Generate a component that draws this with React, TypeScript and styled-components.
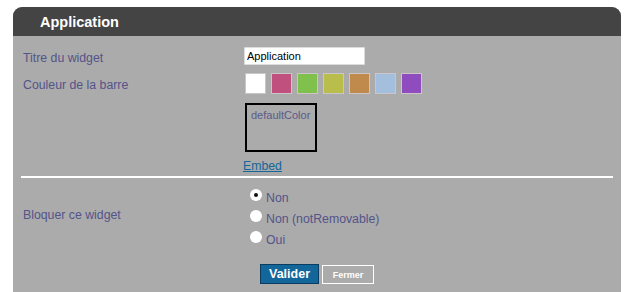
import React, { useState } from "react"
import styled, { createGlobalStyle } from "styled-components"

const GlobalStyle = createGlobalStyle`
  html, body {
    margin: 0;
    padding: 0;
    background: #ffffff;
    font-family: "Liberation Sans", Arial, sans-serif;
  }
`

const COLORS = ["#ffffff", "#c0507e", "#80c04c", "#b8bd4c", "#c08a4c", "#a4bfdd", "#8e4cbf"]

const Panel = styled.div`
  margin: 7px 0 0 13px;
  width: 608px;
  height: 285px;
  background: #ababab;
  border-radius: 9px 9px 0 0;
  overflow: hidden;
`

const Header = styled.div`
  height: 29px;
  background: #444444;
  color: #ffffff;
  font-weight: bold;
  font-size: 14.5px;
  display: flex;
  align-items: center;
  padding-left: 27px;
  padding-top: 1px;
  box-sizing: border-box;
`

const Body = styled.div`
  padding: 11px 8px 0 8px;
`

const Row = styled.div<{ $center?: boolean }>`
  display: grid;
  grid-template-columns: 221px 1fr;
  align-items: ${p => (p.$center ? "center" : "start")};
  padding-left: 2px;
`

const Label = styled.div<{ $top?: number }>`
  color: #54548a;
  font-size: 12.3px;
  padding-top: ${p => p.$top ?? 0}px;
`

const TextInput = styled.input`
  width: 121px;
  height: 18px;
  box-sizing: border-box;
  border: 1px solid #dddddd;
  background: #ffffff;
  font-family: "Liberation Sans", Arial, sans-serif;
  font-size: 11px;
  color: #000000;
  padding: 0 2px;
  border-radius: 1px;
  outline: none;
`

const Swatches = styled.div`
  display: flex;
  gap: 5px;
  margin: 8px 0 0 1px;
`

const Swatch = styled.div<{ $color: string }>`
  width: 21px;
  height: 21px;
  box-sizing: border-box;
  background: ${p => p.$color};
  border: 1px solid #cbc4c8;
`

const Preview = styled.div`
  margin: 9px 0 0 1px;
  width: 72px;
  height: 49px;
  box-sizing: border-box;
  border: 2px solid #000000;
  padding: 4px 4px;
  font-size: 11px;
  color: #5a5a8a;
`

const EmbedLink = styled.a`
  display: inline-block;
  margin: 7px 0 0 -1px;
  font-size: 12.3px;
  color: #13679a;
  text-decoration: underline;
`

const Separator = styled.div`
  height: 2px;
  background: #ffffff;
  margin: 2px 0 0 0;
`

const RadioList = styled.div`
  display: flex;
  flex-direction: column;
  gap: 4px;
  padding: 11px 0 0 6px;
`

const RadioRow = styled.label`
  display: flex;
  align-items: center;
  gap: 4px;
  font-size: 12.3px;
  color: #54548a;
  height: 17px;
`

const RadioDot = styled.span<{ $checked: boolean }>`
  width: 12px;
  height: 12px;
  border-radius: 50%;
  background: #ffffff;
  display: flex;
  align-items: center;
  justify-content: center;
  margin-top: -5px;
  &::after {
    content: "";
    width: 4px;
    height: 4px;
    border-radius: 50%;
    background: ${p => (p.$checked ? "#111111" : "transparent")};
  }
`

const Buttons = styled.div`
  display: flex;
  gap: 3px;
  padding: 16px 0 0 239px;
  align-items: center;
`

const PrimaryButton = styled.button`
  width: 59px;
  height: 20px;
  background: #12669a;
  border: 1px solid #0b3d60;
  color: #ffffff;
  font-family: "Liberation Sans", Arial, sans-serif;
  font-weight: bold;
  font-size: 12.5px;
  padding: 0;
`

const GhostButton = styled.button`
  width: 52px;
  height: 19px;
  margin-top: 1px;
  background: transparent;
  border: 1px solid #ffffff;
  color: #ffffff;
  font-family: "Liberation Sans", Arial, sans-serif;
  font-weight: bold;
  font-size: 9px;
  padding: 0;
`

const OPTIONS = ["Non", "Non (notRemovable)", "Oui"]

export default function App() {
  const [choice, setChoice] = useState(0)

  return (
    <>
      <GlobalStyle />
      <Panel>
        <Header>Application</Header>
        <Body>
          <Row $center>
            <Label $top={3}>Titre du widget</Label>
            <TextInput defaultValue="Application" />
          </Row>
          <Row>
            <Label $top={13}>Couleur de la barre</Label>
            <div>
              <Swatches>
                {COLORS.map(c => (
                  <Swatch key={c} $color={c} />
                ))}
              </Swatches>
              <Preview>defaultColor</Preview>
              <EmbedLink href="#">Embed</EmbedLink>
            </div>
          </Row>
          <Separator />
          <Row $center>
            <Label $top={4}>Bloquer ce widget</Label>
            <RadioList>
              {OPTIONS.map((o, i) => (
                <RadioRow key={o} onClick={() => setChoice(i)}>
                  <RadioDot $checked={choice === i} />
                  {o}
                </RadioRow>
              ))}
            </RadioList>
          </Row>
          <Buttons>
            <PrimaryButton>Valider</PrimaryButton>
            <GhostButton>Fermer</GhostButton>
          </Buttons>
        </Body>
      </Panel>
    </>
  )
}
